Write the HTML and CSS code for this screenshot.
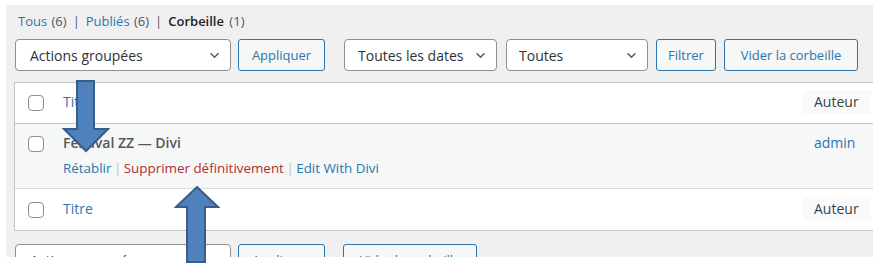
FILE: index.html
```html
<!DOCTYPE html>
<html lang="fr">
<head>
    <meta charset="UTF-8">
    <meta name="viewport" content="width=device-width, initial-scale=1.0">
    <title>Articles - Corbeille</title>
    <link rel="stylesheet" href="styles.css">
</head>
<body>
    <div class="wrap">
        <ul class="subsubsub">
            <li><a href="#">Tous <span class="count">(6)</span></a><span class="bar">|</span></li>
            <li><a href="#">Publiés <span class="count">(6)</span></a><span class="bar">|</span></li>
            <li><a href="#" class="current">Corbeille <span class="count">(1)</span></a></li>
        </ul>

        <div class="tablenav">
            <div class="select w-bulk">Actions groupées <svg class="chev" viewBox="0 0 12 8"><path d="M1.5 1.5 L6 6 L10.5 1.5"/></svg></div>
            <button class="btn w-apply">Appliquer</button>
            <div class="select w-dates">Toutes les dates <svg class="chev" viewBox="0 0 12 8"><path d="M1.5 1.5 L6 6 L10.5 1.5"/></svg></div>
            <div class="select w-cats">Toutes <svg class="chev" viewBox="0 0 12 8"><path d="M1.5 1.5 L6 6 L10.5 1.5"/></svg></div>
            <button class="btn w-filter">Filtrer</button>
            <button class="btn w-empty">Vider la corbeille</button>
        </div>

        <div class="list">
            <div class="row head">
                <div class="cb"><span class="check"></span></div>
                <div class="title"><a href="#">Titre</a></div>
                <div class="author">Auteur</div>
            </div>
            <div class="row item">
                <div class="cb"><span class="check"></span></div>
                <div class="title">
                    <strong>Festival ZZ — Divi</strong>
                    <div class="row-actions">
                        <a href="#">Rétablir</a> <span class="sep">|</span>
                        <a href="#" class="delete">Supprimer définitivement</a> <span class="sep">|</span>
                        <a href="#">Edit With Divi</a>
                    </div>
                </div>
                <div class="author plain"><a href="#">admin</a></div>
            </div>
            <div class="row foot">
                <div class="cb"><span class="check"></span></div>
                <div class="title"><a href="#">Titre</a></div>
                <div class="author">Auteur</div>
            </div>
        </div>

        <div class="tablenav bottom">
            <div class="select w-bulk">Actions groupées <svg class="chev" viewBox="0 0 12 8"><path d="M1.5 1.5 L6 6 L10.5 1.5"/></svg></div>
            <button class="btn w-apply">Appliquer</button>
            <button class="btn w-empty">Vider la corbeille</button>
        </div>
    </div>

    <!-- annotation arrows drawn over the screenshot -->
    <svg class="arrow arrow-down" viewBox="0 0 48 74">
        <path d="M15 1 H32 V49 H46 L24 71 L2 49 H15 Z"/>
    </svg>
    <svg class="arrow arrow-up" viewBox="0 0 46 78">
        <path d="M23 1 L44 21 H31 V76 H13 V21 H2 Z"/>
    </svg>
</body>
</html>
```

FILE: styles.css
```css
body {
    margin: 0;
    background: #fff;
    font-family: 'Open Sans', 'Noto Sans', sans-serif;
    color: #3c434a;
    position: relative;
    width: 884px;
    height: 274px;
    overflow: hidden;
}
a {
    color: #2c75ad;
    text-decoration: none;
}
.wrap {
    margin: 5px 0 0 6px;
    width: 867px;
    height: 252px;
    background: #f0f0f1;
    padding: 0 0 0 8px;
    box-sizing: border-box;
    overflow: hidden;
}
.subsubsub {
    list-style: none;
    margin: 0;
    padding: 6px 0 0 4px;
    height: 28px;
    box-sizing: border-box;
    font-size: 13px;
    line-height: 20px;
    color: #50575e;
    display: flex;
}
.subsubsub li {
    white-space: nowrap;
}
.subsubsub .count {
    color: #50575e;
    margin-left: 1px;
}
.subsubsub .bar {
    color: #50575e;
    padding: 0 6px;
}
.subsubsub .current {
    color: #1d2327;
    font-weight: 600;
}
.subsubsub .current .count {
    font-weight: 400;
    margin-left: 2px;
}
.tablenav {
    display: flex;
    align-items: center;
    height: 32px;
    margin: 6px 0 0 1px;
}
.select {
    height: 32px;
    box-sizing: border-box;
    border: 1px solid #8c8f94;
    border-radius: 4px;
    background: #fff;
    font-size: 14px;
    color: #2c3338;
    display: flex;
    align-items: center;
    justify-content: space-between;
    padding: 0 10px 0 14px;
    white-space: nowrap;
}
.chev {
    width: 11px;
    height: 7px;
    fill: none;
    stroke: #50575e;
    stroke-width: 1.6;
}
.btn {
    height: 32px;
    box-sizing: border-box;
    border: 1px solid #2c75ad;
    border-radius: 3px;
    background: #f6f7f7;
    color: #2c75ad;
    font-family: inherit;
    font-size: 13px;
    padding: 0 10px;
    white-space: nowrap;
}
.w-bulk { width: 216px; }
.w-apply { width: 87px; margin-left: 7px; }
.w-dates { width: 153px; margin-left: 19px; padding-left: 13px; }
.w-cats { width: 142px; margin-left: 9px; padding-left: 12px; }
.w-filter { width: 60px; margin-left: 8px; }
.w-empty { width: 134px; margin-left: 8px; }
.bottom .w-empty { margin-left: 18px; }
.bottom {
    margin-top: 13px;
}
.list {
    margin-top: 11px;
    width: 862px;
    border: 1px solid #c3c4c7;
    background: #fff;
}
.row {
    display: grid;
    grid-template-columns: 48px 1fr 68px;
    padding-right: 6px;
    align-items: start;
}
.head {
    height: 40px;
    border-bottom: 1px solid #c3c4c7;
}
.item {
    height: 64px;
    background: #f6f7f7;
    border-bottom: 1px solid #dcdcde;
}
.foot {
    height: 41px;
}
.foot .cb {
    padding-top: 13px;
}
.foot .title {
    padding-top: 10px;
}
.foot .author {
    margin-top: 8px;
}
.cb {
    padding: 12px 0 0 13px;
}
.check {
    display: block;
    width: 16px;
    height: 16px;
    box-sizing: border-box;
    border: 1px solid #8c8f94;
    border-radius: 4px;
    background: #fff;
}
.title {
    font-size: 14px;
    line-height: 20px;
    padding-top: 9px;
}
.title strong {
    font-weight: 600;
    color: #50575e;
}
.row-actions {
    font-size: 13.4px;
    line-height: 20px;
    margin-top: 5px;
    color: #a7aaad;
}
.row-actions .delete {
    color: #b32d2e;
}
.row-actions .sep {
    color: #c3c4c7;
    margin: 0 -1px;
}
.author {
    font-size: 14px;
    line-height: 20px;
    margin-top: 7px;
    padding: 2px 12px 2px 11px;
    background: #fafafa;
    color: #3c434a;
}
.author.plain {
    background: none;
}
.arrow {
    position: absolute;
    fill: #4f81bd;
    stroke: #385d8a;
    stroke-width: 2;
}
.arrow-down {
    left: 62px;
    top: 80px;
    width: 48px;
    height: 74px;
}
.arrow-up {
    left: 174px;
    top: 186px;
    width: 46px;
    height: 78px;
}
```
